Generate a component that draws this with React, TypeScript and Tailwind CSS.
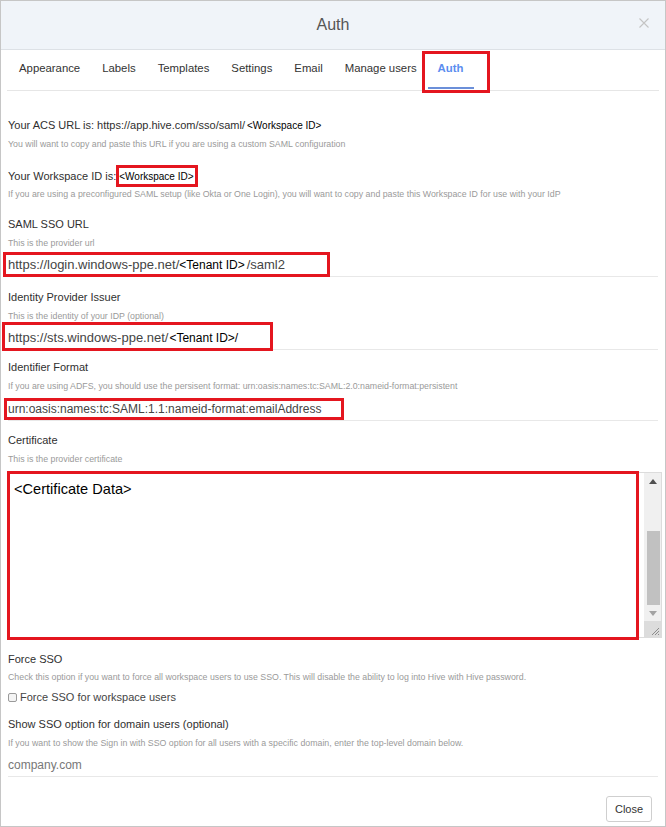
import React from "react";

const tabs = ["Appearance", "Labels", "Templates", "Settings", "Email", "Manage users"];

function Label({ children, className = "" }: { children: React.ReactNode; className?: string }) {
  return <div className={`flex h-[20px] items-center text-[11px] text-[#2f2f2f] ${className}`}>{children}</div>;
}

function Hint({ children, className = "h-[20px]" }: { children: React.ReactNode; className?: string }) {
  return <div className={`flex items-center whitespace-nowrap text-[8.8px] text-[#9a9a9a] ${className}`}>{children}</div>;
}

export default function App() {
  return (
    <div className="flex h-[827px] w-[666px] flex-col border border-[#c6c6c6] bg-white font-['Liberation_Sans',Arial,sans-serif]">
      {/* modal header */}
      <div className="relative flex h-[49px] shrink-0 items-center justify-center border-b border-[#dde1e6] bg-[#f0f4f9]">
        <span className="text-[16px] text-[#555]">Auth</span>
        <svg className="absolute right-[16px] top-[17px]" width="10" height="10" viewBox="0 0 10 10">
          <path d="M0.5 0.5L9.5 9.5M9.5 0.5L0.5 9.5" stroke="#c4c4c4" strokeWidth="1.1" />
        </svg>
      </div>

      {/* tabs */}
      <div className="mx-[6px] flex h-[41px] shrink-0 border-b border-[#e6e6e6] pl-[1px]">
        {tabs.map((t) => (
          <div key={t} className="flex items-center px-[11px] pb-[3px] text-[11.35px] text-[#333]">
            {t}
          </div>
        ))}
        <div className="relative flex items-center px-[10px] pb-[3px]">
          <span className="text-[11.35px] font-bold text-[#5b8def]">Auth</span>
          <div className="absolute bottom-[1px] left-[0px] h-[2px] w-[46px] bg-[#6b8fd9]" />
          <div className="absolute left-[-6px] top-[1px] h-[42px] w-[68px] border-[3px] border-[#e4161f]" />
        </div>
      </div>

      {/* body */}
      <div className="px-[7px]">
        <Label className="mt-[24px]">
          Your ACS URL is: https://app.hive.com/sso/saml/
          <span className="ml-[2px] text-[10px] text-black">&lt;Workspace ID&gt;</span>
        </Label>
        <Hint>You will want to copy and paste this URL if you are using a custom SAML configuration</Hint>

        <div className="mt-[10px] flex h-[22px] items-center text-[11px] text-[#2f2f2f]">
          Your Workspace ID is:
          <span className="ml-[0px] flex h-[22px] w-[82px] items-center border-[3px] border-[#e4161f] text-[10px] text-black">
            &lt;Workspace ID&gt;
          </span>
        </div>
        <Hint className="h-[16px]">
          If you are using a preconfigured SAML setup (like Okta or One Login), you will want to copy and paste this Workspace ID for use with your IdP
        </Hint>

        <Label className="mt-[11px]">SAML SSO URL</Label>
        <Hint>This is the provider url</Hint>
        <div className="relative flex h-[23px] items-center border-b border-[#e8e8e8] text-[13px] text-[#444]">
          https://login.windows-ppe.net/
          <span className="text-[12px] text-black">&lt;Tenant ID&gt;</span>
          <span className="ml-[2px]">/saml2</span>
          <div className="absolute left-[-5px] top-[-2px] h-[25px] w-[327px] border-[3px] border-[#e4161f]" />
        </div>

        <Label className="mt-[10px]">Identity Provider Issuer</Label>
        <Hint>This is the identity of your IDP (optional)</Hint>
        <div className="relative flex h-[23px] items-center border-b border-[#e8e8e8] text-[13px] text-[#444]">
          https://sts.windows-ppe.net/
          <span className="ml-[1px] text-[12px] text-black">&lt;Tenant ID&gt;/</span>
          <div className="absolute left-[-6px] top-[-5px] h-[29px] w-[271px] border-[3px] border-[#e4161f]" />
        </div>

        <Label className="mt-[7px]">Identifier Format</Label>
        <Hint>If you are using ADFS, you should use the persisent format: urn:oasis:names:tc:SAML:2.0:nameid-format:persistent</Hint>
        <div className="relative flex h-[24px] items-center border-b border-[#e8e8e8] text-[12px] text-[#444]">
          urn:oasis:names:tc:SAML:1.1:nameid-format:emailAddress
          <div className="absolute left-[-4px] top-[1px] h-[22px] w-[340px] border-[3px] border-[#e4161f]" />
        </div>

        <Label className="mt-[9px]">Certificate</Label>
        <Hint>This is the provider certificate</Hint>
        <div className="relative -mr-[4px] mt-[2px] flex h-[166px] border border-[#dcdcdc]">
          <div className="flex-1 pl-[5px] pt-[6px] text-[14.6px] text-black">&lt;Certificate Data&gt;</div>
          <div className="flex w-[17px] flex-col bg-[#f0f0f0]">
            <div className="flex h-[17px] items-center justify-center">
              <svg width="8" height="5" viewBox="0 0 8 5">
                <path d="M4 0L8 5H0Z" fill="#505050" />
              </svg>
            </div>
            <div className="h-[41px]" />
            <div className="ml-[3px] mr-[1px] h-[74px] bg-[#c1c1c1]" />
            <div className="flex h-[16px] items-center justify-center">
              <svg width="8" height="5" viewBox="0 0 8 5">
                <path d="M0 0H8L4 5Z" fill="#a3a3a3" />
              </svg>
            </div>
            <div className="flex flex-1 items-end justify-end bg-[#dcdcdc] pb-[1px] pr-[1px]">
              <svg width="10" height="10" viewBox="0 0 10 10">
                <path d="M9 2L2 9M9 5L5 9M9 8L8 9" stroke="#777" strokeWidth="0.8" />
              </svg>
            </div>
          </div>
          <div className="absolute left-[-2px] top-[-2px] h-[169px] w-[632px] border-[3px] border-[#e4161f]" />
        </div>

        <Label className="mt-[11px]">Force SSO</Label>
        <Hint className="h-[18px]">
          Check this option if you want to force all workspace users to use SSO. This will disable the ability to log into Hive with Hive password.
        </Hint>
        <div className="flex h-[20px] items-center text-[11px] text-[#444]">
          <span className="mr-[3px] h-[9px] w-[9px] rounded-[2px] border border-[#9a9a9a] bg-[#f4f4f4]" />
          Force SSO for workspace users
        </div>

        <Label className="mt-[7px]">Show SSO option for domain users (optional)</Label>
        <Hint>If you want to show the Sign in with SSO option for all users with a specific domain, enter the top-level domain below.</Hint>
        <div className="flex h-[23px] items-center border-b border-[#e8e8e8] text-[12px] text-[#777]">company.com</div>
      </div>

      {/* footer */}
      <div className="mt-[19px] flex justify-end pr-[13px]">
        <button className="h-[26px] w-[46px] rounded-[3px] border border-[#cfcfcf] bg-white text-[11px] text-[#333]">
          Close
        </button>
      </div>
    </div>
  );
}
